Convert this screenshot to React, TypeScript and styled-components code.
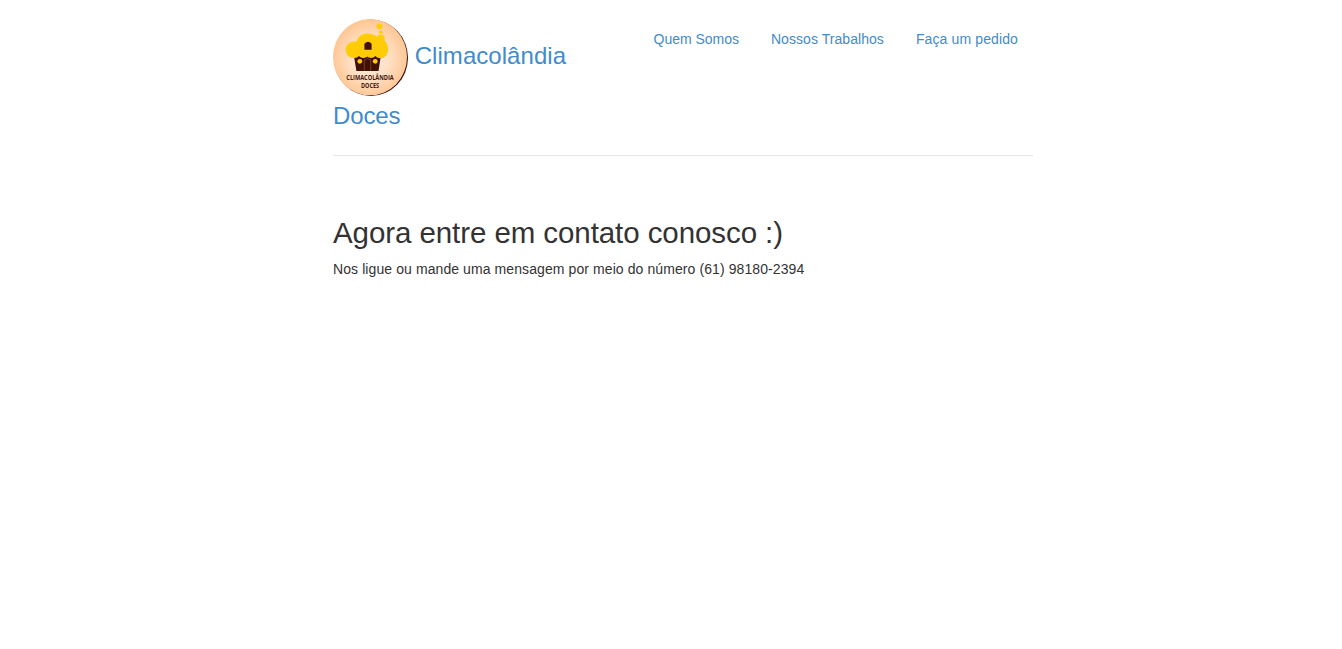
import React from "react";
import styled, { createGlobalStyle } from "styled-components";

const GlobalStyle = createGlobalStyle`
  *, *::before, *::after { box-sizing: border-box; }
  body {
    margin: 0;
    background: #fff;
    color: #333;
    font-family: "Liberation Sans", Arial, sans-serif;
    font-size: 14px;
    line-height: 20px;
  }
`;

const Container = styled.div`
  width: 700px;
  margin-left: 333px;
`;

const Header = styled.header`
  display: flex;
  justify-content: space-between;
  align-items: flex-start;
  height: 156px;
  padding-top: 19px;
  border-bottom: 1px solid #e5e5e5;
`;

const Brand = styled.h3`
  width: 245px;
  margin: 0;
  font-size: 24px;
  font-weight: 500;
  line-height: 40px;
  letter-spacing: 0.03px;
`;

const BrandWord = styled.span<{ $tight?: boolean }>`
  letter-spacing: ${(p) => (p.$tight ? "-0.15px" : "0.05px")};
`;

const Link = styled.a`
  color: #428bca;
  text-decoration: none;
`;

const Logo = styled.svg`
  width: 75px;
  height: 77px;
  vertical-align: middle;
`;

const Nav = styled.nav`
  display: flex;
  gap: 2px;
`;

const NavLink = styled(Link)<{ $spacing: number }>`
  padding: 10px 15px;
  letter-spacing: ${(p) => p.$spacing}px;
`;

const Main = styled.main`
  padding-top: 60px;
`;

const Title = styled.h2`
  margin: 0 0 10px;
  font-size: 29.5px;
  font-weight: 500;
  line-height: 33px;
  letter-spacing: -0.08px;
`;

const Text = styled.p`
  margin: 0;
  letter-spacing: 0.09px;
`;

function CakeHouseLogo() {
  return (
    <Logo viewBox="0 0 75 77" aria-label="Climacolândia Doces">
      <defs>
        <radialGradient id="peach" cx="50%" cy="52%" r="52%">
          <stop offset="0" stopColor="#ffeddc" />
          <stop offset="0.5" stopColor="#fee0c5" />
          <stop offset="1" stopColor="#ffc591" />
        </radialGradient>
      </defs>
      <ellipse cx="37.9" cy="38.8" rx="37.1" ry="38.2" fill="#3c1010" />
      <ellipse cx="37" cy="38.2" rx="37" ry="38.1" fill="url(#peach)" />
      <path d="M20.8 36h27.2l-2.5 16H23.4z" fill="#421009" />
      <path
        d="M21 39C16 39.5 12.7 35.5 12.7 30.5c0-5.5 5-8.8 10.8-8 1.5-5.2 5.8-8 11-8 4 0 7.2 1.3 9.4 3.5.4-1.6 2-2.6 3.9-2.6 3.5 0 5 3.2 3.6 6.2 3 2.5 4.4 6.8 3.4 11.2-1 4.5-4 6.5-7.3 6.5-2.2 0-3.7-.8-5-2.2-2.5 2.4-6 2.4-8.2.4-2.5 2.1-6 2-8.4-.4-1.2 1.4-2.7 2-4.9 1.9z"
        fill="#ffcc05"
      />
      <ellipse cx="46.5" cy="7.4" rx="3" ry="2.7" fill="#ffcc05" />
      <ellipse cx="47.8" cy="13.1" rx="2.1" ry="1.7" fill="#ffcc05" />
      <path d="M31.4 30.8v-6q3.6-4 7.2 0v6z" fill="#421009" />
      <circle cx="26.8" cy="42.3" r="2.4" fill="#ffcc05" />
      <circle cx="42.2" cy="42.3" r="2.4" fill="#ffcc05" />
      <path d="M31.3 52V41q3.2-3 6.4 0v11" fill="none" stroke="#8f6018" strokeWidth="0.6" />
      <g fill="#451610" fontFamily="Open Sans, sans-serif" fontWeight="700" fontSize="6.2" letterSpacing="0">
        <text x="13.3" y="61.3" textLength="47.4" lengthAdjust="spacingAndGlyphs">CLIMACOLÂNDIA</text>
        <text x="28" y="69.4" textLength="18" lengthAdjust="spacingAndGlyphs">DOCES</text>
      </g>
    </Logo>
  );
}

export default function App() {
  return (
    <>
      <GlobalStyle />
      <Container>
        <Header>
          <Brand>
            <Link href="#">
              <CakeHouseLogo /> <BrandWord>Climacolândia</BrandWord> <BrandWord $tight>Doces</BrandWord>
            </Link>
          </Brand>
          <Nav>
            <NavLink href="#" $spacing={-0.02}>Quem Somos</NavLink>
            <NavLink href="#" $spacing={0.06}>Nossos Trabalhos</NavLink>
            <NavLink href="#" $spacing={0.12}>Faça um pedido</NavLink>
          </Nav>
        </Header>
        <Main>
          <Title>Agora entre em contato conosco :)</Title>
          <Text>Nos ligue ou mande uma mensagem por meio do número (61) 98180-2394</Text>
        </Main>
      </Container>
    </>
  );
}
